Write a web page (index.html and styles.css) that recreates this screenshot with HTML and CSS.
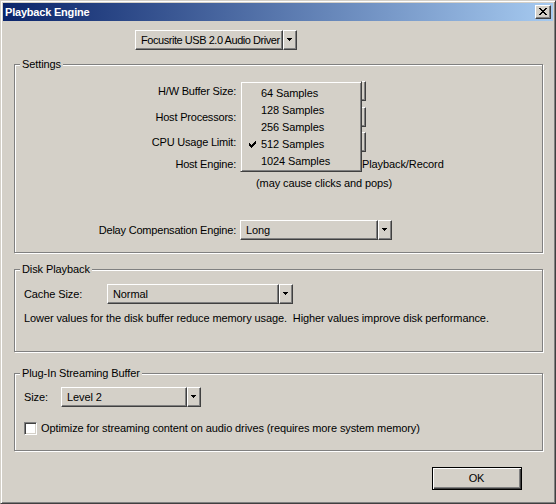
FILE: index.html
```html
<!DOCTYPE html>
<html>
<head>
<meta charset="utf-8">
<title>Playback Engine</title>
<link rel="stylesheet" href="styles.css">
</head>
<body>
<div class="window">
  <div class="titlebar">
    <span class="title">Playback Engine</span>
    <span class="close"><svg width="8" height="7" viewBox="0 0 8 7" shape-rendering="crispEdges"><path d="M0 0h2v1h-2zM6 0h2v1h-2zM1 1h2v1h-2zM5 1h2v1h-2zM2 2h4v1h-4zM3 3h2v1h-2zM2 4h4v1h-4zM1 5h2v1h-2zM5 5h2v1h-2zM0 6h2v1h-2zM6 6h2v1h-2z" fill="#000"/></svg></span>
  </div>
  <div class="content">
    <div class="driver-row">
      <div class="dd dd-driver">
        <span class="dd-main">Focusrite USB 2.0 Audio Driver</span>
        <span class="dd-arrow"><svg width="5" height="3" viewBox="0 0 5 3" shape-rendering="crispEdges"><path d="M0 0h5v1h-1v1h-1v1h-1v-1h-1v-1h-1z" fill="#000"/></svg></span>
      </div>
    </div>

    <section class="group settings">
      <span class="legend">Settings</span>
      <div class="srow r1">
        <span class="slabel">H/W Buffer Size:</span>
        <div class="dd dd-hidden"><span class="dd-main"></span><span class="dd-arrow"></span></div>
      </div>
      <div class="srow r2">
        <span class="slabel">Host Processors:</span>
        <div class="dd dd-hidden"><span class="dd-main"></span><span class="dd-arrow"></span></div>
      </div>
      <div class="srow r3">
        <span class="slabel">CPU Usage Limit:</span>
        <div class="dd dd-hidden"><span class="dd-main"></span><span class="dd-arrow"></span></div>
      </div>
      <div class="srow r4">
        <span class="slabel">Host Engine:</span>
        <span class="check"></span>
        <span class="hostlabel">Playback/Record</span>
      </div>
      <div class="srow r5">
        <span class="slabel"></span>
        <span class="note">(may cause clicks and pops)</span>
      </div>
      <div class="srow r6">
        <span class="slabel">Delay Compensation Engine:</span>
        <div class="dd dd-delay">
          <span class="dd-main">Long</span>
          <span class="dd-arrow"><svg width="5" height="3" viewBox="0 0 5 3" shape-rendering="crispEdges"><path d="M0 0h5v1h-1v1h-1v1h-1v-1h-1v-1h-1z" fill="#000"/></svg></span>
        </div>
      </div>

      <ul class="menu">
        <li class="mitem">64 Samples</li>
        <li class="mitem">128 Samples</li>
        <li class="mitem">256 Samples</li>
        <li class="mitem checked"><svg class="tick" width="7" height="7" viewBox="0 0 7 7" shape-rendering="crispEdges"><path d="M6 0h1v1h-1zM5 1h2v1h-2zM0 2h1v1h-1zM4 2h3v1h-3zM0 3h2v1h-2zM3 3h3v1h-3zM0 4h5v1h-5zM1 5h3v1h-3zM2 6h1v1h-1z" fill="#000"/></svg>512 Samples</li>
        <li class="mitem">1024 Samples</li>
      </ul>
    </section>

    <section class="group disk">
      <span class="legend">Disk Playback</span>
      <div class="frow">
        <span class="flabel cache-label">Cache Size:</span>
        <div class="dd dd-cache">
          <span class="dd-main">Normal</span>
          <span class="dd-arrow"><svg width="5" height="3" viewBox="0 0 5 3" shape-rendering="crispEdges"><path d="M0 0h5v1h-1v1h-1v1h-1v-1h-1v-1h-1z" fill="#000"/></svg></span>
        </div>
      </div>
      <p class="hint">Lower values for the disk buffer reduce memory usage.&nbsp; Higher values improve disk performance.</p>
    </section>

    <section class="group plugin">
      <span class="legend">Plug-In Streaming Buffer</span>
      <div class="frow">
        <span class="flabel size-label">Size:</span>
        <div class="dd dd-size">
          <span class="dd-main">Level 2</span>
          <span class="dd-arrow"><svg width="5" height="3" viewBox="0 0 5 3" shape-rendering="crispEdges"><path d="M0 0h5v1h-1v1h-1v1h-1v-1h-1v-1h-1z" fill="#000"/></svg></span>
        </div>
      </div>
      <div class="crow">
        <span class="check"></span>
        <span class="clabel">Optimize for streaming content on audio drives (requires more system memory)</span>
      </div>
    </section>

    <div class="footer">
      <span class="okbtn">OK</span>
    </div>
  </div>
</div>
</body>
</html>
```

FILE: styles.css
```css
html, body {
  margin: 0;
  padding: 0;
}

body {
  width: 556px;
  height: 504px;
  overflow: hidden;
  font-family: "Liberation Sans", Arial, sans-serif;
  font-size: 11px;
  letter-spacing: -0.1px;
  color: #000;
  background: #d4d0c8;
}

.window {
  box-sizing: border-box;
  width: 556px;
  height: 504px;
  background: #d4d0c8;
  border: 1px solid;
  border-color: #d4d0c8 #404040 #404040 #d4d0c8;
  box-shadow: inset 1px 1px #fff, inset -1px -1px #808080;
  padding: 2px;
}

.titlebar {
  box-sizing: border-box;
  height: 18px;
  display: flex;
  align-items: center;
  justify-content: space-between;
  background: linear-gradient(to right, #0a246a, #a6caf0);
  padding: 0 2px 0 2px;
}

.title {
  color: #fff;
  font-weight: bold;
  font-size: 11px;
  line-height: 13px;
  letter-spacing: -0.2px;
}

.close {
  box-sizing: border-box;
  width: 16px;
  height: 14px;
  background: #d4d0c8;
  border: 1px solid;
  border-color: #fff #404040 #404040 #fff;
  box-shadow: inset -1px -1px #808080;
  display: flex;
  align-items: center;
  justify-content: center;
  padding: 0 1px 1px 0;
}

.close svg { display: block; }

.content {
  padding: 0 10px 0 11px;
}

/* dropdowns */
.dd {
  display: flex;
  height: 20px;
  box-sizing: border-box;
}

.dd-main {
  flex: 1;
  min-width: 0;
  box-sizing: border-box;
  display: flex;
  align-items: center;
  padding-left: 5px;
  white-space: nowrap;
  overflow: hidden;
  background: #d4d0c8;
  border: 1px solid;
  border-color: #fff #404040 #404040 #fff;
  box-shadow: inset -1px -1px #808080;
  line-height: 13px;
}

.dd-arrow {
  flex: 0 0 14px;
  box-sizing: border-box;
  display: flex;
  align-items: center;
  justify-content: center;
  background: #d4d0c8;
  border: 1px solid;
  border-color: #fff #404040 #404040 #fff;
  box-shadow: inset -1px -1px #808080;
  padding: 0 1px 1px 0;
}

.dd-arrow svg { display: block; }

.driver-row {
  margin-top: 9px;
  padding-left: 121px;
  display: flex;
}

.dd-driver { width: 162px; }
.dd-driver .dd-main {
  padding-left: 5px;
  letter-spacing: -0.45px;
}

.dd-hidden { width: 126px; }
.dd-delay { width: 152px; }
.dd-cache { width: 186px; }
.dd-size { width: 140px; }

/* group boxes */
.group {
  position: relative;
  box-sizing: border-box;
  border: 1px solid #808080;
  box-shadow: inset 1px 1px #fff, 1px 1px #fff;
  margin: 0;
}

.legend {
  position: absolute;
  top: -7px;
  left: 5px;
  padding: 0 2px;
  background: #d4d0c8;
  line-height: 13px;
  white-space: nowrap;
}

.settings {
  margin-top: 14px;
  height: 189px;
  padding-top: 16px;
}

.srow {
  display: flex;
  align-items: center;
  height: 20px;
}

.slabel {
  flex: 0 0 221px;
  text-align: right;
  margin-right: 4px;
  line-height: 13px;
  white-space: nowrap;
  letter-spacing: -0.2px;
}

.r2 { margin-top: 6px; }
.r3 { margin-top: 5px; }
.r4 { margin-top: 3px; height: 18px; }
.r5 { margin-top: 2px; height: 16px; }
.r6 { margin-top: 29px; }

.hostlabel {
  margin-left: 109px;
  white-space: nowrap;
  line-height: 13px;
}

.note {
  padding-left: 16px;
  line-height: 13px;
  white-space: nowrap;
}

.check {
  flex: 0 0 13px;
  width: 13px;
  height: 13px;
  box-sizing: border-box;
  background: #fff;
  border: 1px solid;
  border-color: #808080 #fff #fff #808080;
  box-shadow: inset 1px 1px #404040, inset -1px -1px #d4d0c8;
}

/* popup menu */
.menu {
  position: absolute;
  left: 225px;
  top: 16px;
  width: 122px;
  height: 91px;
  box-sizing: border-box;
  margin: 0;
  padding: 3px 2px 1px 2px;
  list-style: none;
  background: #d4d0c8;
  border: 1px solid;
  border-color: #d4d0c8 #404040 #404040 #d4d0c8;
  box-shadow: inset 1px 1px #fff, inset -1px -1px #808080;
}

.mitem {
  position: relative;
  height: 17px;
  line-height: 17px;
  padding-left: 18px;
  white-space: nowrap;
}

.tick {
  position: absolute;
  left: 6px;
  top: 5px;
}

/* disk / plugin */
.disk {
  margin-top: 16px;
  height: 83px;
  padding: 14px 0 0 9px;
}

.plugin {
  margin-top: 21px;
  height: 78px;
  padding: 13px 0 0 9px;
}

.frow {
  display: flex;
  align-items: center;
  height: 20px;
}

.flabel {
  line-height: 13px;
  white-space: nowrap;
}

.cache-label { flex: 0 0 83px; }
.size-label { flex: 0 0 37px; }

.hint {
  margin: 7px 0 0 0;
  line-height: 14px;
  white-space: nowrap;
}

.crow {
  display: flex;
  align-items: center;
  height: 13px;
  margin-top: 15px;
}

.clabel {
  margin-left: 4px;
  line-height: 13px;
  white-space: nowrap;
}

/* footer */
.footer {
  margin-top: 16px;
  display: flex;
  justify-content: flex-end;
  padding-right: 21px;
}

.okbtn {
  box-sizing: border-box;
  width: 90px;
  height: 23px;
  display: flex;
  align-items: center;
  justify-content: center;
  background: #d4d0c8;
  border: 1px solid #000;
  box-shadow: inset 1px 1px #fff, inset -1px -1px #404040, inset -2px -2px #808080;
  padding: 0 1px 1px 0;
}
```
